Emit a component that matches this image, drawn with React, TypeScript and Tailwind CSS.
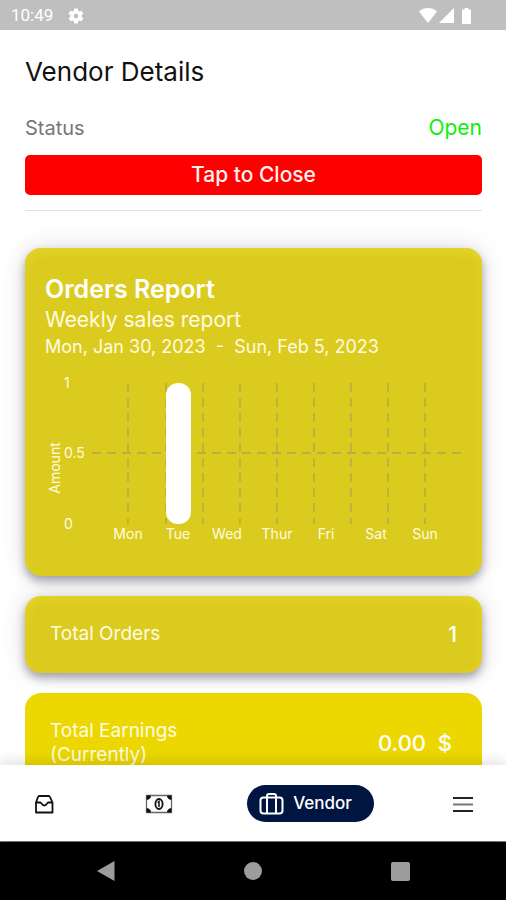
import { useState } from "react";

const days = [
  { label: "Mon", amount: 0 },
  { label: "Tue", amount: 1 },
  { label: "Wed", amount: 0 },
  { label: "Thur", amount: 0 },
  { label: "Fri", amount: 0 },
  { label: "Sat", amount: 0 },
  { label: "Sun", amount: 0 },
];

const cardStyle =
  "rounded-2xl bg-[#dccb1f] shadow-[0_5px_9px_rgba(70,70,100,0.45),0_0_26px_rgba(0,0,0,0.14),inset_0_4px_12px_rgba(240,224,50,0.5)]";

function StatusBar() {
  return (
    <header className="flex h-[30px] shrink-0 items-center justify-between bg-[#bfbfbf] pt-px pr-8 pl-[11px] font-[Roboto,sans-serif] text-[17px] text-white">
      <div className="flex items-center gap-[14px]">
        <span>10:49</span>
        <svg width="18" height="18" viewBox="0 0 24 24" fill="currentColor">
          <path
            fillRule="evenodd"
            d="M19.4 13c.1-.3.1-.7.1-1s0-.7-.1-1l2.100-1.600c.2-.2.3-.4.1-.7l-2-3.400c-.1-.2-.4-.3-.6-.2l-2.500 1c-.5-.4-1.100-.7-1.700-1l-.4-2.600c0-.3-.2-.5-.5-.5h-4c-.3 0-.5.2-.5.500l-.4 2.600c-.6.3-1.200.6-1.700 1l-2.500-1c-.2-.1-.5 0-.6.2l-2 3.400c-.1.2-.1.5.1.7L4.500 11c0 .3-.1.700-.1 1s0 .7.100 1l-2.100 1.600c-.2.2-.3.4-.1.7l2 3.400c.1.2.4.3.6.2l2.500-1c.5.4 1.100.7 1.700 1l.4 2.600c0 .3.2.5.5.5h4c.3 0 .5-.2.5-.5l.4-2.600c.6-.3 1.200-.6 1.700-1l2.500 1c.2.1.5 0 .6-.2l2-3.400c.1-.2.1-.5-.1-.7zM12 15a3 3 0 1 1 0-6 3 3 0 0 1 0 6z"
          />
        </svg>
      </div>
      <svg width="55" height="18" viewBox="0 0 55 18" fill="currentColor">
        <path d="M0 4.500C2.500 2 5.500 1 9 1s6.500 1 9 3.500L9 16z" />
        <path d="M35 1v15H20z" />
        <path d="M43 3.500q0-1 1-1h1.500V1h4v1.500H51q1 0 1 1V16q0 1-1 1h-7q-1 0-1-1z" />
      </svg>
    </header>
  );
}

function OrdersChart() {
  return (
    <svg viewBox="0 0 457 180" className="w-full" fontSize="14" fill="#fffbe0">
      <g stroke="#a09a58" strokeOpacity="0.75" strokeDasharray="9 6">
        {[103, 141, 178, 215, 252, 289, 326, 363, 400].map((x) => (
          <path key={x} d={`M${x} 13V154`} strokeWidth="1.300" />
        ))}
        <path d="M67 83H437" strokeWidth="1.300" />
      </g>
      <text x="39" y="18">1</text>
      <text x="39" y="88">0.5</text>
      <text x="39" y="159">0</text>
      <text transform="translate(35 98) rotate(-90)" textAnchor="middle">
        Amount
      </text>
      {days.map((day, i) => (
        <g key={day.label}>
          {day.amount > 0 && (
            <rect
              x={103 + i * 50 - 12}
              y={154 - day.amount * 141}
              width="25"
              height={day.amount * 141}
              rx="12"
              fill="#fff"
            />
          )}
          <text x={Math.round(103 + i * 49.5)} y="169" textAnchor="middle">
            {day.label}
          </text>
        </g>
      ))}
    </svg>
  );
}

function BottomNav() {
  return (
    <nav className="z-10 flex h-[76px] shrink-0 items-center justify-between bg-white pt-px pr-8 pl-[33px] shadow-[0_-2px_14px_rgba(0,0,0,0.15)]">
      <button aria-label="Orders">
        <svg width="22" height="22" viewBox="0 0 22 22" fill="none" stroke="#111" strokeWidth="1.800">
          <path d="M3 19.500V9.500l2-5.500Q5.300 3 6.500 3h9q1.200 0 1.500 1L19.500 9.500v10z" strokeLinejoin="round" />
          <path d="M3 9.500h4.500c1 .3 1.500 3 3.800 3s2.800-2.700 3.700-3h4.500" />
        </svg>
      </button>
      <button aria-label="Earnings" className="ml-4">
        <svg width="28" height="22" viewBox="0 0 28 22" fill="none" stroke="#111">
          <path d="M1.500 2.500h25v17h-25z" strokeWidth="1.300" stroke="#666" />
          <path d="M2 3h3.500c0 2-1.500 3.300-3.500 3.300zM26 3h-3.500c0 2 1.500 3.300 3.500 3.300zM2 19h3.500c0-2-1.500-3.300-3.500-3.300zM26 19h-3.500c0-2 1.500-3.300 3.500-3.300z" fill="#111" />
          <ellipse cx="14" cy="11" rx="3.600" ry="5" strokeWidth="1.800" />
          <path d="M12.500 9.500l1.500-1V14" strokeWidth="1.500" />
        </svg>
      </button>
      <button className="flex h-[37px] items-center gap-2 rounded-full bg-[#001641] pr-[22px] pl-3 text-[17px] font-medium text-white">
        <svg width="26" height="24" viewBox="0 0 26 24" fill="none" stroke="currentColor" strokeWidth="2">
          <rect x="1.500" y="5.500" width="22" height="16" rx="3" />
          <path d="M8 21.500V4a2 2 0 0 1 2-2h5a2 2 0 0 1 2 2v17.500" />
        </svg>
        Vendor
      </button>
      <button aria-label="Menu" className="ml-1">
        <svg width="22" height="20" viewBox="0 0 22 20" fill="none" stroke="#222" strokeWidth="2">
          <path d="M1 4h20M1 17h20" />
          <path d="M1 10.500h20" stroke="#777" />
        </svg>
      </button>
    </nav>
  );
}

export default function App() {
  const [open, setOpen] = useState(true);

  return (
    <div className="flex h-screen flex-col overflow-hidden bg-white font-[Inter,sans-serif]">
      <StatusBar />
      <main className="min-h-0 flex-1 overflow-hidden pt-6 pr-6 pl-[25px]">
        <h1 className="text-[26px] leading-9 text-[#111]">Vendor Details</h1>
        <div className="mt-6 flex items-center justify-between leading-7">
          <span className="text-[20px] text-[#777]">Status</span>
          <span className="text-[21px] text-[#0fee0f]">
            {open ? "Open" : "Closed"}
          </span>
        </div>
        <button
          className="mt-[13px] h-10 w-full rounded-[5px] bg-[#ff0000] text-[21px] font-medium text-[#fff0f0]"
          onClick={() => setOpen(!open)}
        >
          {open ? "Tap to Close" : "Tap to Open"}
        </button>
        <hr className="mt-[15px] border-[#e2e2e2]" />

        <section className={`${cardStyle} mt-[37px] pt-6 pb-[26px]`}>
          <div className="px-5 text-[#fffbe0]">
            <h2 className="text-[25px] leading-[34px] font-semibold text-white">
              Orders Report
            </h2>
            <p className="text-[21px] leading-7">Weekly sales report</p>
            <p className="text-[18px] leading-[26px] whitespace-pre">
              Mon, Jan 30, 2023  -  Sun, Feb 5, 2023
            </p>
          </div>
          <div className="mt-[10px]">
            <OrdersChart />
          </div>
        </section>

        <section
          className={`${cardStyle} mt-5 flex h-[77px] items-center justify-between px-[25px]`}
        >
          <span className="text-[19px] text-[#fffbe0]">Total Orders</span>
          <span className="text-[21px] font-medium text-white">1</span>
        </section>

        <section className="mt-5 flex h-[100px] items-center justify-between rounded-2xl bg-[#ecd800] pr-[30px] pl-[25px]">
          <p className="text-[19px] leading-6 text-[#fffbe0]">
            Total Earnings
            <br />
            (Currently)
          </p>
          <span className="text-[22px] font-medium whitespace-pre text-white">
            0.00  $
          </span>
        </section>
      </main>
      <BottomNav />
      <footer className="flex h-[59px] shrink-0 items-center justify-around border-t border-[#777] bg-black px-8 text-[#9c9c9c]">
        <button aria-label="Back">
          <svg width="20" height="22" viewBox="0 0 20 22" fill="currentColor">
            <path d="M1 11L18.500 1v20z" />
          </svg>
        </button>
        <button aria-label="Home" className="size-[18px] rounded-full bg-[#9c9c9c]" />
        <button aria-label="Recent apps" className="size-[19px] rounded-xs bg-[#9c9c9c]" />
      </footer>
    </div>
  );
}
